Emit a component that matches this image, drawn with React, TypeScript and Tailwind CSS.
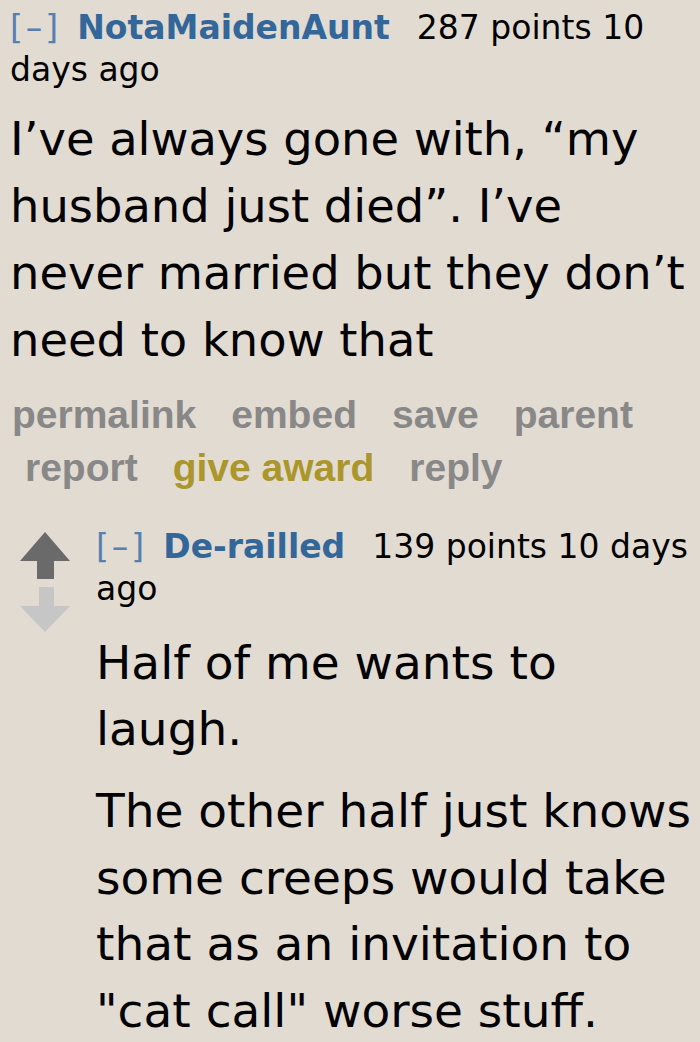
import React from "react";

const body = { fontFamily: '"DejaVu Sans", Verdana, sans-serif' };
const actions = { fontFamily: '"Liberation Sans", Arial, sans-serif' };

function Arrows() {
  return (
    <svg width="50" height="101" viewBox="0 0 50 101" className="shrink-0">
      <path d="M25 0 L50 29 L34 29 L34 47 L17 47 L17 29 L0 29 Z" fill="#6a6a6a" />
      <path d="M19 55 L34 55 L34 74 L50 74 L25 100 L0 74 L19 74 Z" fill="#c6c6c6" />
    </svg>
  );
}

function Tagline({ name, points }: { name: string; points: string }) {
  return (
    <div className="text-[33px] leading-[42px]">
      <span className="text-[#5580b0] tracking-[3px]">[–]</span>
      <span className="font-bold text-[#336699] ml-[16px]">{name}</span>
      <span className="ml-[27px]">{points} points 10 days ago</span>
    </div>
  );
}

export default function App() {
  return (
    <div className="w-[700px] h-[1042px] overflow-hidden bg-[#e2dbd2] text-black" style={body}>
      <div className="pl-[10px] pt-[7px]">
        <Tagline name="NotaMaidenAunt" points="287" />
      </div>
      <p className="pl-[10px] mt-[15px] text-[46.4px] leading-[67px]">
        I’ve always gone with, “my husband just died”. I’ve never married but they don’t need to know that
      </p>
      <div style={actions} className="mt-[14px] font-bold text-[39px] leading-[53px] text-[#888888]">
        <div className="flex gap-[35px] pl-[12px]">
          <span>permalink</span>
          <span>embed</span>
          <span>save</span>
          <span>parent</span>
        </div>
        <div className="flex gap-[35px] pl-[25px]">
          <span>report</span>
          <span className="text-[#ab962c]">give award</span>
          <span>reply</span>
        </div>
      </div>
      <div className="flex mt-[32px] pl-[20px]">
        <div className="pt-[6px]">
          <Arrows />
        </div>
        <div className="ml-[26px]">
          <Tagline name="De-railled" points="139" />
          <p className="mt-[20px] text-[47px] leading-[66px]">Half of me wants to laugh.</p>
          <p className="mt-[16px] text-[47px] leading-[66.6px]">
            The other half just knows some creeps would take that as an invitation to "cat call" worse stuff.
          </p>
        </div>
      </div>
    </div>
  );
}
